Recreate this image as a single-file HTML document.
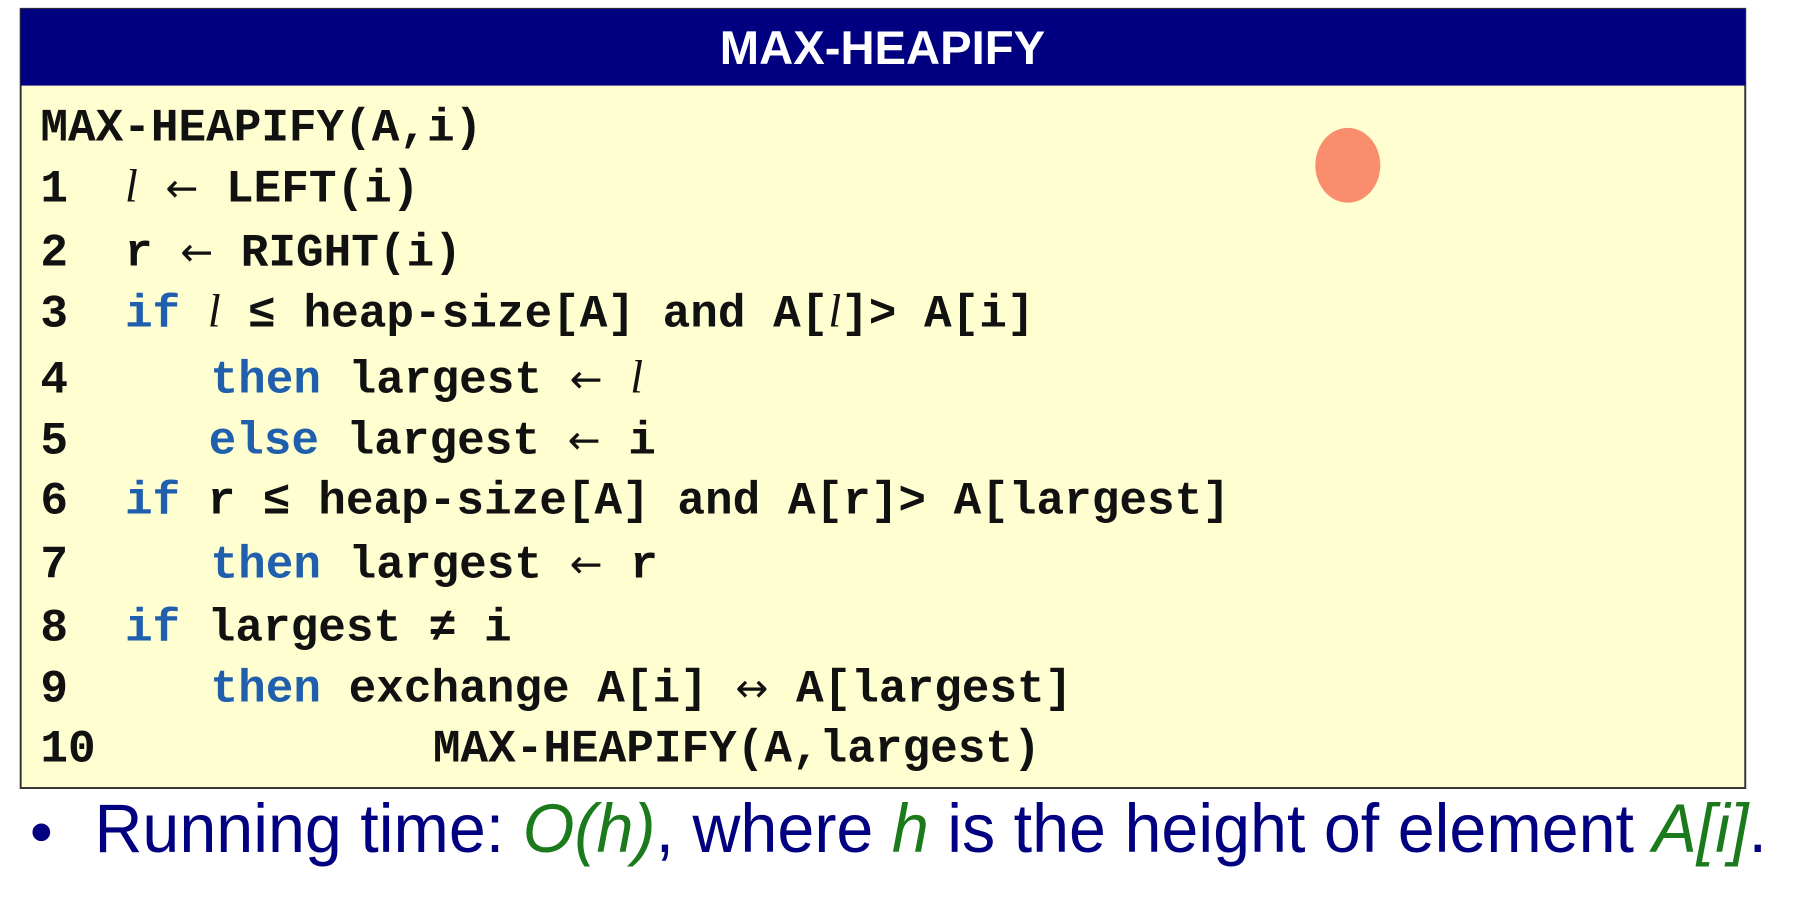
<!DOCTYPE html>
<html><head><meta charset="utf-8"><style>
html,body{margin:0;padding:0;background:#fff;width:1810px;height:910px;overflow:hidden}
svg{display:block}
.c{font-family:"Liberation Mono",monospace;font-weight:bold;font-size:46.8px;fill:#111}
.k{fill:#1f5fae}
.l{font-family:"Liberation Serif",serif;font-style:italic;font-weight:normal}
.a{font-family:"DejaVu Sans",sans-serif;font-weight:normal;font-size:40px}
</style></head><body>
<svg width="1810" height="910" xmlns="http://www.w3.org/2000/svg">
<g transform="scale(0.9838)">
<rect x="21" y="9" width="1753" height="792" fill="#fefed0" stroke="#333" stroke-width="2"/>
<rect x="21" y="9" width="1753" height="78" fill="#000080"/>
<text x="897" y="65" text-anchor="middle" font-family="Liberation Sans,sans-serif" font-weight="bold" font-size="48" fill="#fff">MAX-HEAPIFY</text>
<ellipse cx="1370" cy="168" rx="33" ry="38" fill="#f98d6e"/>
<g class="c" xml:space="preserve">
<text x="41" y="143">MAX-HEAPIFY(A,i)</text>
<text x="41" y="205">1</text><text x="127" y="205"><tspan class="l">l</tspan> <tspan class="a">←</tspan> LEFT(i)</text>
<text x="41" y="270">2</text><text x="127" y="270">r <tspan class="a">←</tspan> RIGHT(i)</text>
<text x="41" y="332">3</text><text x="127" y="332"><tspan class="k">if</tspan> <tspan class="l">l</tspan> ≤ heap-size[A] and A[<tspan class="l">l</tspan>]&gt; A[i]</text>
<text x="41" y="399">4</text><text x="214" y="399"><tspan class="k">then</tspan> largest <tspan class="a">←</tspan> <tspan class="l">l</tspan></text>
<text x="41" y="461">5</text><text x="212" y="461"><tspan class="k">else</tspan> largest <tspan class="a">←</tspan> i</text>
<text x="41" y="522">6</text><text x="127" y="522"><tspan class="k">if</tspan> r ≤ heap-size[A] and A[r]&gt; A[largest]</text>
<text x="41" y="587">7</text><text x="214" y="587"><tspan class="k">then</tspan> largest <tspan class="a">←</tspan> r</text>
<text x="41" y="651">8</text><text x="127" y="651"><tspan class="k">if</tspan> largest ≠ i</text>
<text x="41" y="713">9</text><text x="214" y="713"><tspan class="k">then</tspan> exchange A[i] <tspan class="a">↔</tspan> A[largest]</text>
<text x="41" y="774">10</text><text x="440" y="774">MAX-HEAPIFY(A,largest)</text>
</g>
<circle cx="42" cy="846" r="9" fill="#000080"/>
<text x="96" y="866" font-family="Liberation Sans,sans-serif" font-size="70" fill="#000080" textLength="1700" lengthAdjust="spacingAndGlyphs">Running time: <tspan fill="#1b7a1b" font-style="italic">O(h)</tspan>, where <tspan fill="#1b7a1b" font-style="italic">h</tspan> is the height of element <tspan fill="#1b7a1b" font-style="italic">A[i]</tspan>.</text>
</g>
</svg>
</body></html>
